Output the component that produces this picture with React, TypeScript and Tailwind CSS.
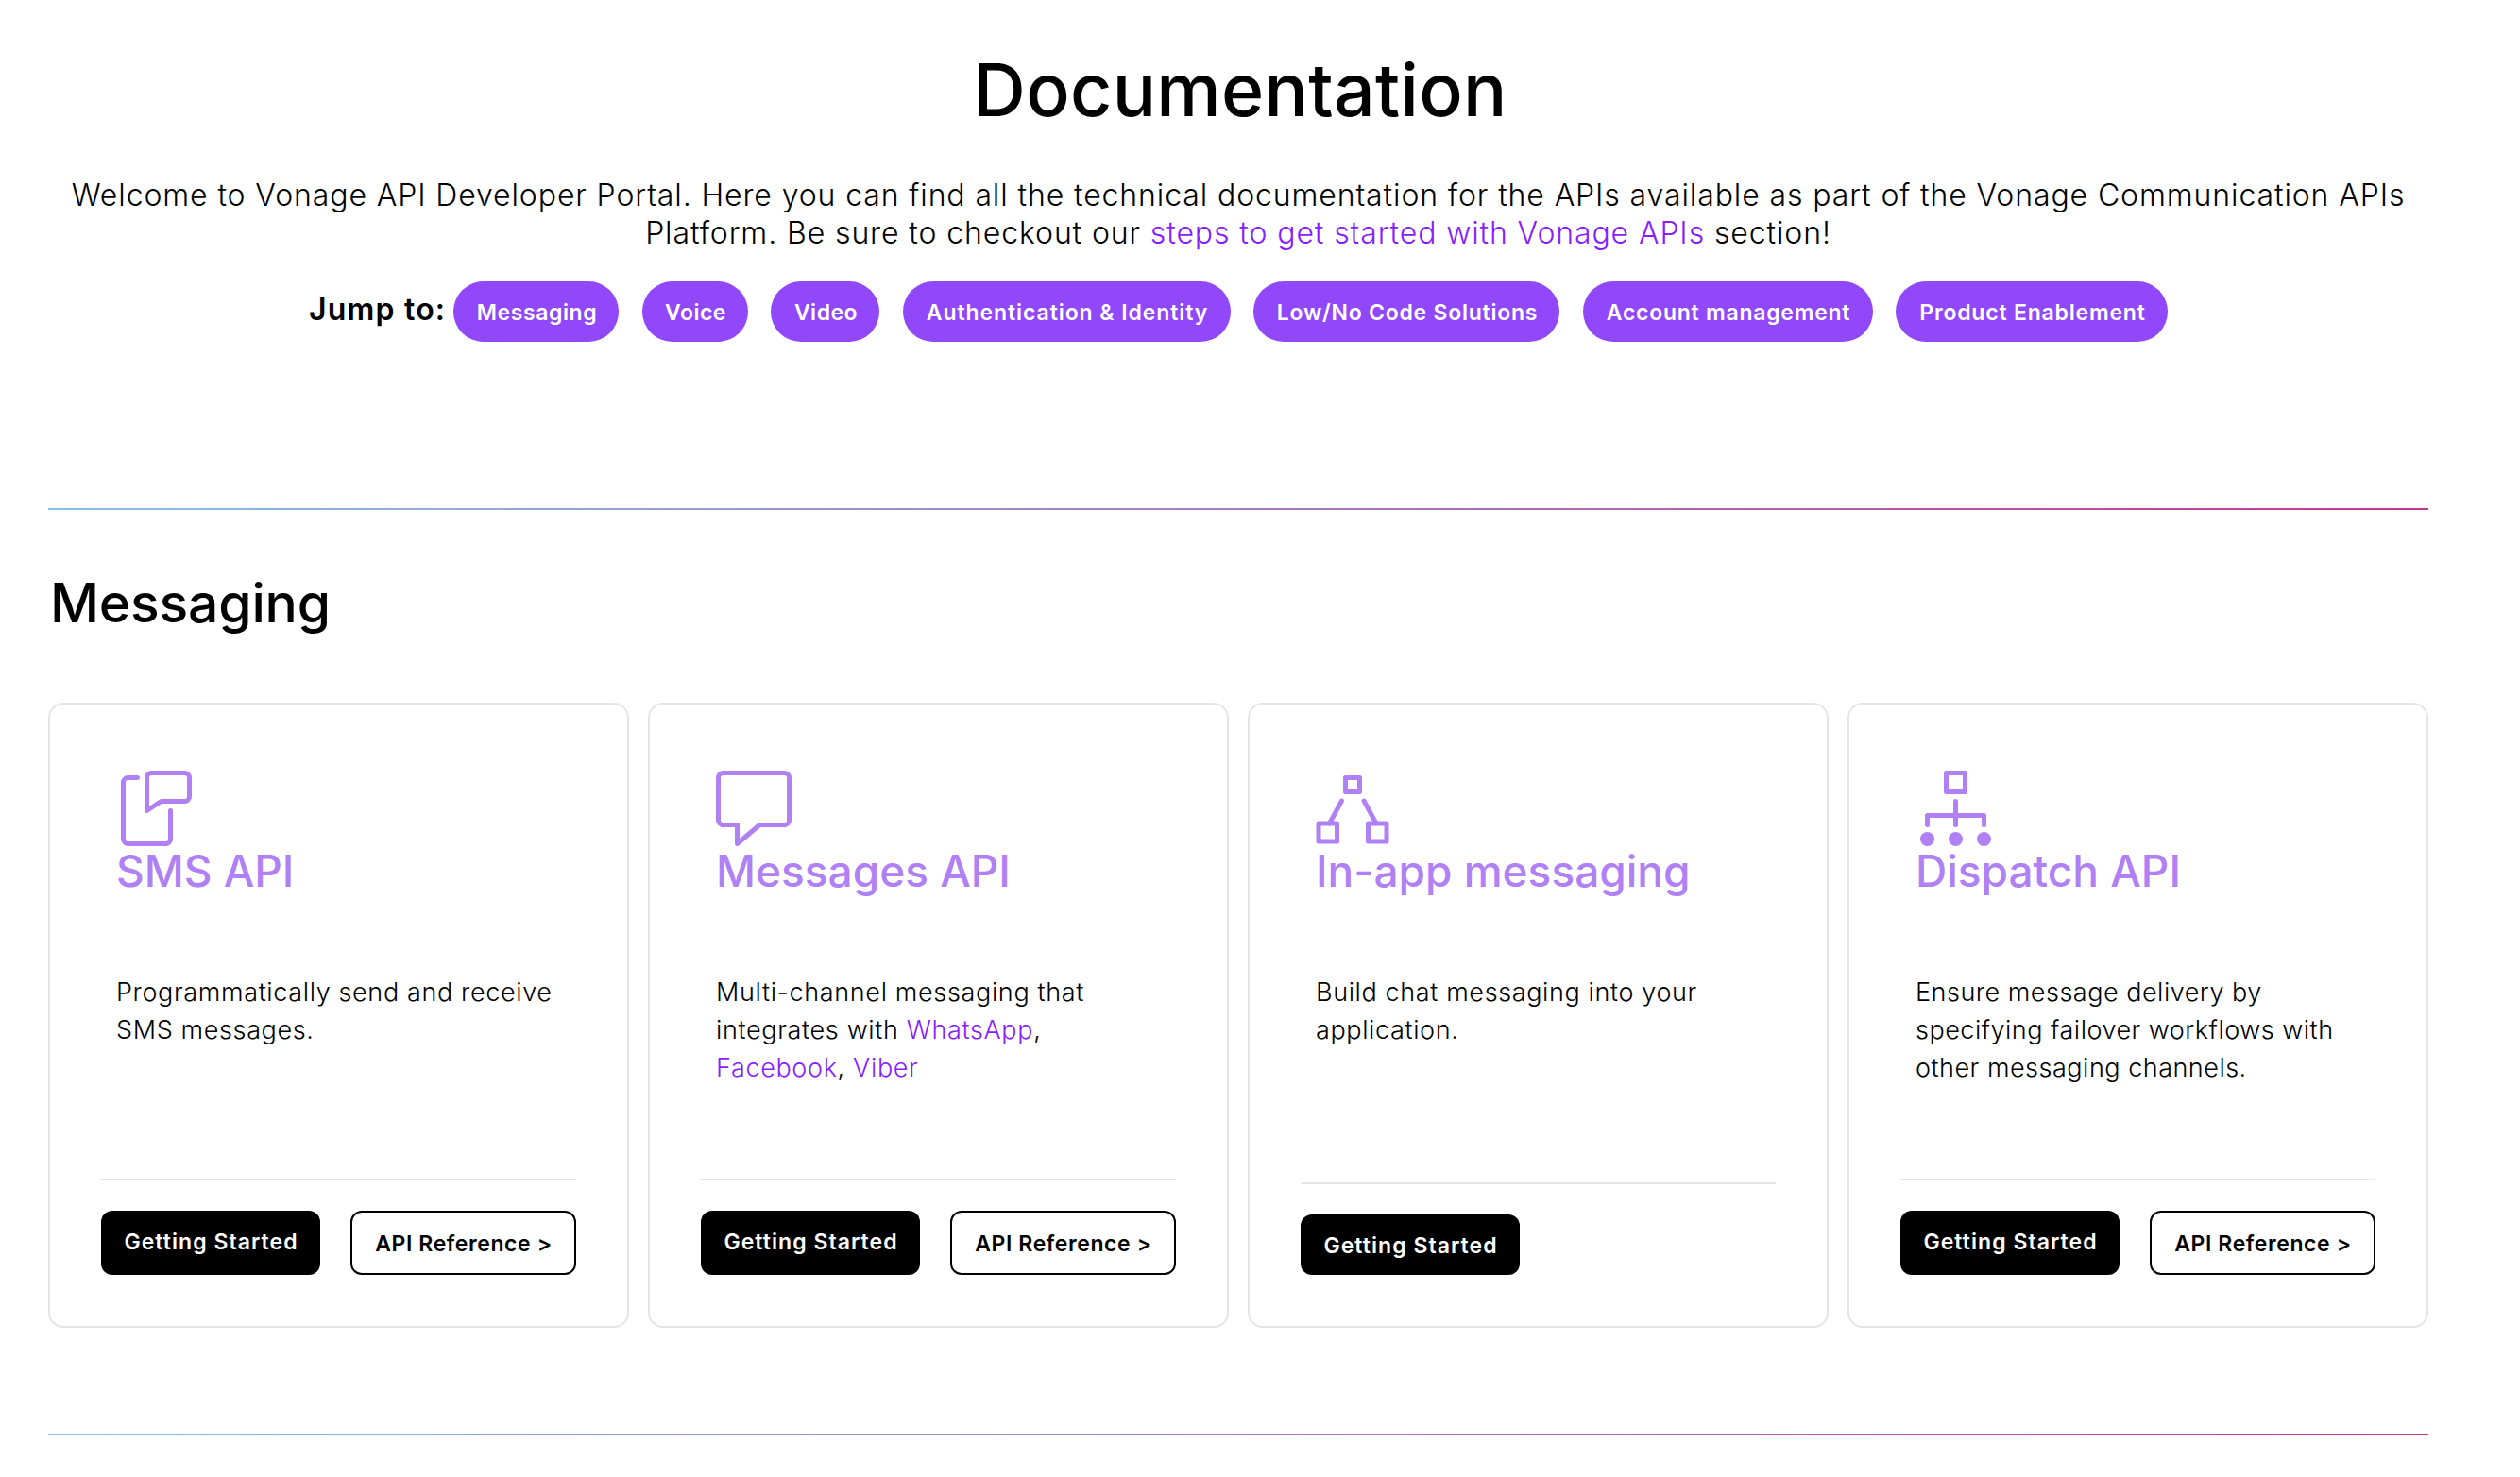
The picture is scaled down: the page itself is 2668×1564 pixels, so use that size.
import { ReactNode } from 'react';

interface JumpLink {
  label: string;
  className: string;
}

interface Product {
  title: string;
  icon: ReactNode;
  description: ReactNode;
  descriptionClass: string;
  hasReference: boolean;
}

const jumpLinks: JumpLink[] = [
  { label: 'Messaging', className: 'w-[175px] tracking-[0.6px]' },
  { label: 'Voice', className: 'w-[112px] tracking-[0.5px]' },
  { label: 'Video', className: 'w-[115px] tracking-[0.5px]' },
  { label: 'Authentication & Identity', className: 'w-[347px] tracking-[0.92px]' },
  { label: 'Low/No Code Solutions', className: 'w-[324px] tracking-[0.75px]' },
  { label: 'Account management', className: 'w-[307px] tracking-[0.75px]' },
  { label: 'Product Enablement', className: 'w-[288px] tracking-[0.8px]' },
];

function Icon({ children }: { children: ReactNode }) {
  return (
    <svg
      viewBox="0 0 16 16"
      className="block h-20 w-20 text-[#b080f5]"
      fill="none"
      stroke="currentColor"
      strokeWidth="1"
      strokeLinecap="round"
      strokeLinejoin="round"
    >
      {children}
    </svg>
  );
}

function Link({ children }: { children: ReactNode }) {
  return (
    <a href="#" className="text-[#871eff]">
      {children}
    </a>
  );
}

const products: Product[] = [
  {
    title: 'SMS API',
    icon: (
      <Icon>
        <path d="M4.5 1.5h-2a1 1 0 0 0-1 1v12a1 1 0 0 0 1 1h8a1 1 0 0 0 1-1v-6" />
        <path d="M6.5 1.5a1 1 0 0 1 1-1h7a1 1 0 0 1 1 1v4a1 1 0 0 1-1 1h-5l-3 2z" />
      </Icon>
    ),
    description: (
      <>
        Programmatically send and receive
        <br />
        SMS messages.
      </>
    ),
    descriptionClass: 'tracking-[0.63px]',
    hasReference: true,
  },
  {
    title: 'Messages API',
    icon: (
      <Icon>
        <path d="M1.5.5h13a1 1 0 0 1 1 1v9a1 1 0 0 1-1 1H9.25L4.5 15.5v-4h-3a1 1 0 0 1-1-1v-9a1 1 0 0 1 1-1z" />
      </Icon>
    ),
    description: (
      <>
        Multi-channel messaging that
        <br />
        integrates with <Link>WhatsApp</Link>,
        <br />
        <Link>Facebook</Link>, <Link>Viber</Link>
      </>
    ),
    descriptionClass: 'tracking-[0.65px]',
    hasReference: true,
  },
  {
    title: 'In-app messaging',
    icon: (
      <Icon>
        <path d="M6.3 1.5h3v3h-3zM.6 11.2h3.9V15H.6zM11.1 11.2H15V15h-3.9z" />
        <path d="M5.5 6.4l-2.6 4.8M10.2 6.4l2.6 4.8" />
      </Icon>
    ),
    description: (
      <>
        Build chat messaging into your
        <br />
        application.
      </>
    ),
    descriptionClass: 'tracking-[0.62px]',
    hasReference: false,
  },
  {
    title: 'Dispatch API',
    icon: (
      <Icon>
        <path d="M6.5.5h4v4h-4zM8.5 6.5v5M2.5 11.5v-2h12v2" />
        <g fill="currentColor" stroke="none">
          <circle cx="2.5" cy="14.5" r="1.5" />
          <circle cx="8.5" cy="14.5" r="1.5" />
          <circle cx="14.5" cy="14.5" r="1.5" />
        </g>
      </Icon>
    ),
    description: (
      <>
        Ensure message delivery by
        <br />
        specifying failover workflows with
        <br />
        other messaging channels.
      </>
    ),
    descriptionClass: 'tracking-[0.5px]',
    hasReference: true,
  },
];

function GradientRule() {
  return <div className="h-0.5 w-full bg-linear-to-r/srgb from-[#85c0ee] to-[#c53793]" />;
}

function ProductCard({ product }: { product: Product }) {
  return (
    <div className="flex h-[662px] w-[615px] flex-col rounded-2xl border-2 border-[#e5e5e5] px-[54px] pt-[70px] pb-[54px]">
      <div className="px-4">
        {product.icon}
        <h3 className="text-[46px] leading-[53px] font-medium whitespace-nowrap text-[#b080f5]">{product.title}</h3>
        <p className={`mt-[82px] text-[27px] leading-10 font-light whitespace-nowrap ${product.descriptionClass}`}>
          {product.description}
        </p>
      </div>

      {/* Actions */}
      <div className="mt-auto flex justify-between border-t-2 border-[#e5e5e5] pt-8">
        <a
          href="#"
          className={`flex w-[232px] items-center justify-center rounded-xl bg-black pl-px text-[23px] font-semibold tracking-[1.05px] text-white ${
            product.hasReference ? 'h-[68px] pb-px' : 'h-16 pt-0.5'
          }`}
        >
          Getting Started
        </a>
        {product.hasReference && (
          <a
            href="#"
            className="flex h-[68px] w-[239px] items-center justify-center rounded-xl border-2 border-black pt-0.5 pl-px text-[23px] font-semibold tracking-[0.6px]"
          >
            API Reference &gt;
          </a>
        )}
      </div>
    </div>
  );
}

export default function App() {
  return (
    <div className="min-h-[1564px] w-[2668px] bg-white pt-[50px] pr-[97px] pl-[51px] font-['Inter','Liberation_Sans',sans-serif] text-black">
      <header className="flex flex-col items-center">
        <h1 className="pl-1 text-[77px] leading-[90px] font-medium tracking-[0.3px]">Documentation</h1>
        <p className="mt-[47px] text-center text-[32px] leading-10 font-light tracking-[0.89px] whitespace-nowrap">
          Welcome to Vonage API Developer Portal. Here you can find all the technical documentation for the APIs
          available as part of the Vonage Communication APIs
          <br />
          Platform. Be sure to checkout our <Link>steps to get started with Vonage APIs</Link> section!
        </p>

        {/* Section shortcuts */}
        <nav className="mt-[31px] flex items-center">
          <span className="w-[153px] pb-1 text-[32px] leading-10 font-semibold tracking-[1.2px] whitespace-nowrap">
            Jump to:
          </span>
          <div className="flex gap-[24.5px]">
            {jumpLinks.map((link) => (
              <a
                key={link.label}
                href="#"
                className={`flex h-16 items-center justify-center rounded-full bg-[#9147fa] pt-0.5 pl-0.5 text-[23px] font-semibold whitespace-nowrap text-white ${link.className}`}
              >
                {link.label}
              </a>
            ))}
          </div>
        </nav>
      </header>

      <section className="mt-44">
        <GradientRule />
        <h2 className="mt-[65px] pl-0.5 text-[57px] leading-[68px] font-medium tracking-[-0.2px]">Messaging</h2>
        <div className="mt-[71px] flex gap-5">
          {products.map((product) => (
            <ProductCard key={product.title} product={product} />
          ))}
        </div>
      </section>

      <section className="mt-28">
        <GradientRule />
      </section>
    </div>
  );
}
